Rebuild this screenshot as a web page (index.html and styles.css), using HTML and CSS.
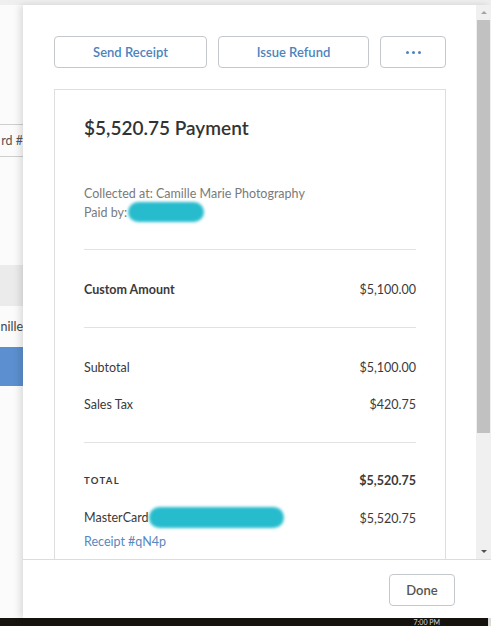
FILE: index.html
```html
<!DOCTYPE html>
<html>
<head>
<meta charset="utf-8">
<link rel="stylesheet" href="styles.css">
</head>
<body>
<div class="screen">
  <div class="topstrip"></div>
  <div class="main">
    <div class="backdrop">
      <div class="bd-input"><span>rd #</span></div>
      <div class="bd-head"></div>
      <div class="bd-row"><span>nille</span></div>
      <div class="bd-selected"></div>
    </div>
    <div class="modal">
      <div class="scrollarea">
        <div class="content">
          <div class="actions">
            <button class="btn btn-send">Send Receipt</button>
            <button class="btn btn-refund">Issue Refund</button>
            <button class="btn btn-more"><span class="dots"><i></i><i></i><i></i></span></button>
          </div>
          <div class="card">
            <h1 class="title">$5,520.75 Payment</h1>
            <div class="meta">
              <div>Collected at: Camille Marie Photography</div>
              <div>Paid by:<span class="blob blob-name"></span></div>
            </div>
            <div class="section">
              <div class="row"><span class="strong">Custom Amount</span><span class="amt">$5,100.00</span></div>
            </div>
            <div class="section">
              <div class="row"><span>Subtotal</span><span class="amt">$5,100.00</span></div>
              <div class="row"><span>Sales Tax</span><span class="amt">$420.75</span></div>
            </div>
            <div class="section last">
              <div class="row total"><span class="caps">TOTAL</span><span class="amt">$5,520.75</span></div>
              <div class="row"><span>MasterCard<span class="blob blob-card"></span></span><span class="amt">$5,520.75</span></div>
              <a class="receipt-link">Receipt #qN4p</a>
            </div>
          </div>
        </div>
        <div class="scrollbar">
          <div class="sb-btn sb-up"></div>
          <div class="sb-track"><div class="sb-thumb"></div></div>
          <div class="sb-btn sb-down"></div>
        </div>
      </div>
      <div class="footer">
        <button class="btn btn-done">Done</button>
      </div>
    </div>
  </div>
  <div class="taskbar"><span class="clock">7:00 PM</span></div>
</div>
</body>
</html>
```
FILE: styles.css
```css
* { box-sizing: border-box; }
html, body { margin: 0; padding: 0; }
body {
  width: 491px;
  height: 626px;
  overflow: hidden;
  font-family: Lato, "Liberation Sans", sans-serif;
  color: #3a3a3a;
  background: #fff;
}
.screen {
  display: flex;
  flex-direction: column;
  height: 626px;
}
.topstrip {
  height: 5px;
  background: #efefef;
  flex: none;
}
.main {
  flex: 1;
  display: flex;
  min-height: 0;
}
.backdrop {
  width: 23px;
  flex: none;
  background: #fbfbfb;
  overflow: hidden;
  display: flex;
  flex-direction: column;
  padding-top: 119px;
}
.bd-input {
  height: 33px;
  border-top: 1px solid #cfcfcf;
  border-bottom: 1px solid #cfcfcf;
  display: flex;
  justify-content: flex-end;
  align-items: center;
  font-size: 12.5px;
  color: #555;
  white-space: nowrap;
}
.bd-head {
  margin-top: 108px;
  height: 41px;
  background: #ebebeb;
}
.bd-row {
  height: 41px;
  display: flex;
  justify-content: flex-end;
  align-items: center;
  font-size: 12.5px;
  color: #444;
  white-space: nowrap;
}
.bd-selected {
  height: 39px;
  background: #5b8fcf;
}
.modal {
  flex: 1;
  display: flex;
  flex-direction: column;
  background: #fff;
  box-shadow: -3px 0 7px rgba(0,0,0,0.13);
  position: relative;
  min-height: 0;
}
.scrollarea {
  flex: 1;
  display: flex;
  min-height: 0;
  overflow: hidden;
  border-bottom: 1px solid #dcdcdc;
}
.content {
  flex: 1;
  padding: 31px 30px 0 31px;
  overflow: hidden;
}
.actions {
  display: flex;
  gap: 11px;
}
.btn {
  height: 32px;
  border: 1px solid #c4c7cb;
  border-radius: 4px;
  background: #fff;
  font-family: Lato, "Liberation Sans", sans-serif;
  font-size: 13px;
  font-weight: 600;
  color: #4d83bd;
  padding: 0;
  display: flex;
  align-items: center;
  justify-content: center;
}
.btn-send { width: 153px; }
.btn-refund { width: 151px; }
.btn-more { width: 66px; }
.dots { display: flex; gap: 3px; }
.dots i {
  display: block;
  width: 3px;
  height: 3px;
  border-radius: 50%;
  background: #4d83bd;
}
.card {
  margin-top: 21px;
  border: 1px solid #dedede;
  border-bottom: none;
  padding: 26px 29px 0 29px;
}
.title {
  margin: 0;
  font-size: 19px;
  line-height: 24px;
  font-weight: 600;
  color: #333;
}
.meta {
  margin-top: 44px;
  font-size: 12.5px;
  line-height: 19px;
  color: #7a7a7a;
  padding-bottom: 27px;
  border-bottom: 1px solid #e2e2e2;
}
.blob {
  display: inline-block;
  vertical-align: middle;
  background: #27bccd;
  border-radius: 11px;
  filter: blur(1.5px);
}
.blob-name {
  width: 76px;
  height: 20px;
  margin-left: 1px;
  margin-top: -3px;
}
.blob-card {
  width: 135px;
  height: 21px;
  margin-left: 0;
  margin-top: -2px;
}
.section {
  padding: 29px 0 28px;
  border-bottom: 1px solid #e2e2e2;
  display: flex;
  flex-direction: column;
  gap: 17px;
}
.section.last { border-bottom: none; padding-top: 27px; gap: 18px; }
.row {
  display: flex;
  justify-content: space-between;
  align-items: center;
  height: 20px;
  font-size: 12.5px;
  color: #3a3a3a;
}
.strong { font-weight: 700; }
.caps {
  font-size: 9.5px;
  font-weight: 700;
  letter-spacing: 1.3px;
}
.total .amt { font-weight: 700; }
.receipt-link {
  margin-top: -13px;
  font-size: 12.5px;
  line-height: 18px;
  color: #5688c0;
}
.scrollbar {
  width: 15px;
  flex: none;
  background: #f0f0f0;
  display: flex;
  flex-direction: column;
}
.sb-btn {
  height: 15px;
  display: flex;
  align-items: center;
  justify-content: center;
}
.sb-up::before {
  content: "";
  border-left: 3px solid transparent;
  border-right: 3px solid transparent;
  border-bottom: 3px solid #a3a3a3;
}
.sb-down::before {
  content: "";
  border-left: 3px solid transparent;
  border-right: 3px solid transparent;
  border-top: 3px solid #505050;
}
.sb-track {
  flex: 1;
  padding: 0 1px;
}
.sb-thumb {
  height: 413px;
  background: #c1c1c1;
}
.footer {
  height: 58px;
  flex: none;
  display: flex;
  justify-content: flex-end;
  align-items: flex-start;
  padding: 14px 36px 0 0;
}
.btn-done {
  width: 66px;
  color: #555;
}
.taskbar {
  height: 8px;
  flex: none;
  background: #17130f;
  overflow: hidden;
  display: flex;
  justify-content: flex-end;
  padding-right: 48px;
  border-right: 3px solid #ddd;
}
.clock {
  font-size: 7px;
  line-height: 8px;
  color: #ddd;
}
```
